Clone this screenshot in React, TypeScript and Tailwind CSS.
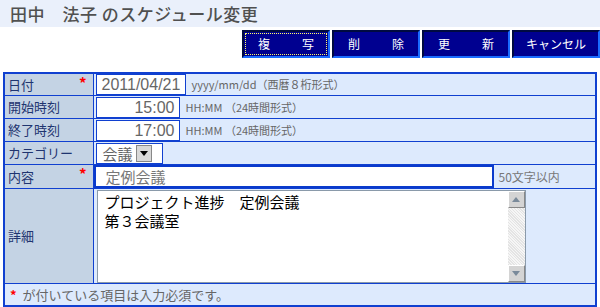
import React from 'react'

const jp = "font-['Noto_Sans_CJK_JP','Liberation_Sans',sans-serif]"
const num = "font-['Liberation_Sans','Noto_Sans_CJK_JP',sans-serif]"

const ActionButton = ({ children, focus }: { children: React.ReactNode; focus?: boolean }) => (
  <div className="h-[28px] w-[88px] border-2 border-t-[#000a40] border-l-[#000a40] border-r-[#1a6bff] border-b-[#1a6bff] bg-[#000090] p-[1px]">
    <div
      className={`flex h-full items-center px-[10px] text-[12px] leading-none text-white ${
        focus ? 'border border-dotted border-[#ffff66]' : 'border border-transparent'
      }`}
    >
      {children}
    </div>
  </div>
)

const Label = ({ text, required }: { text: string; required?: boolean }) => (
  <td className="relative w-[89px] border border-[#1040d0] bg-[#c4d3e4] px-[3px] align-middle text-[13px] text-[#1f3570]">
    {text}
    {required && <span className="absolute right-[6px] top-[1px] text-[15px] font-bold leading-none text-[#ff0000]">*</span>}
  </td>
)

export default function App() {
  return (
    <div className={`h-[307px] w-[600px] overflow-hidden bg-white ${jp}`}>
      {/* タイトル */}
      <div className="flex h-[27px] items-center bg-[#eaf0fb] pl-[10px] text-[17px] font-medium tracking-[0.5px] text-[#505050]">
        田中　法子 のスケジュール変更
      </div>

      {/* ボタン */}
      <div className="mt-[3px] flex justify-end gap-[2px]">
        <ActionButton focus>
          <span className="flex w-full justify-between px-[2px]"><span>複</span><span>写</span></span>
        </ActionButton>
        <ActionButton>
          <span className="flex w-full justify-between px-[2px]"><span>削</span><span>除</span></span>
        </ActionButton>
        <ActionButton>
          <span className="flex w-full justify-between px-[2px]"><span>更</span><span>新</span></span>
        </ActionButton>
        <ActionButton>
          <span className="w-full text-center">キャンセル</span>
        </ActionButton>
      </div>

      {/* フォーム */}
      <table className="ml-[3px] mt-[14px] w-[594px] border-collapse border-2 border-[#1040d0]">
        <tbody>
          <tr className="h-[22px]">
            <Label text="日付" required />
            <td className="border border-[#1040d0] bg-[#ddeafd] py-0 pl-[2px]">
              <div className="flex items-center">
                <div className={`h-[21px] w-[90px] border border-[#1040d0] bg-white pl-[5px] text-[16px] leading-[20px] text-[#666] ${num}`}>
                  2011/04/21
                </div>
                <span className="ml-[6px] text-[11px] text-[#666]">yyyy/mm/dd（西暦８桁形式）</span>
              </div>
            </td>
          </tr>
          <tr className="h-[23px]">
            <Label text="開始時刻" />
            <td className="border border-[#1040d0] bg-[#ddeafd] py-0 pl-[2px]">
              <div className="flex items-center">
                <div className={`h-[21px] w-[84px] border border-[#1040d0] bg-white pr-[4px] text-right text-[16px] leading-[20px] text-[#666] ${num}`}>
                  15:00
                </div>
                <span className="ml-[6px] text-[11px] text-[#666]">HH:MM （24時間形式）</span>
              </div>
            </td>
          </tr>
          <tr className="h-[23px]">
            <Label text="終了時刻" />
            <td className="border border-[#1040d0] bg-[#ddeafd] py-0 pl-[2px]">
              <div className="flex items-center">
                <div className={`h-[21px] w-[84px] border border-[#1040d0] bg-white pr-[4px] text-right text-[16px] leading-[20px] text-[#666] ${num}`}>
                  17:00
                </div>
                <span className="ml-[6px] text-[11px] text-[#666]">HH:MM （24時間形式）</span>
              </div>
            </td>
          </tr>
          <tr className="h-[23px]">
            <Label text="カテゴリー" />
            <td className="border border-[#1040d0] bg-[#ddeafd] py-0 pl-[2px]">
              <div className="flex h-[21px] w-[67px] items-center border border-[#1040d0] bg-white pl-[6px]">
                <span className="text-[15px] leading-none text-[#666]">会議</span>
                <span className="ml-[3px] flex h-[17px] w-[16px] items-center justify-center border border-[#888] bg-[#d8d8d8]">
                  <svg width="8" height="5" viewBox="0 0 8 5"><path d="M0 0h8L4 5z" fill="#000" /></svg>
                </span>
              </div>
            </td>
          </tr>
          <tr className="h-[23px]">
            <Label text="内容" required />
            <td className="border border-[#1040d0] bg-[#ddeafd] p-0">
              <div className="flex items-center">
                <div className="h-[23px] w-[400px] border-2 border-[#0a3acc] bg-white pl-[10px] text-[15px] leading-[19px] text-[#777]">
                  定例会議
                </div>
                <span className="ml-[5px] text-[12px] text-[#777]">50文字以内</span>
              </div>
            </td>
          </tr>
          <tr className="h-[95px]">
            <Label text="詳細" />
            <td className="border border-[#1040d0] bg-[#ddeafd] py-0 pl-[3px]">
              <div className="flex h-[93px] w-[429px] border border-[#8a9aaa] bg-white">
                <div className="flex-1 pl-[7px] pt-[1px] text-[15px] leading-[19px] text-black">
                  プロジェクト進捗　定例会議
                  <br />
                  第３会議室
                </div>
                <div className="flex w-[17px] flex-col bg-[repeating-linear-gradient(45deg,#e4e4e4_0px,#e4e4e4_1px,#f6f6f6_1px,#f6f6f6_2px)]">
                  <div className="flex h-[17px] items-center justify-center border border-b-[#888] border-l-white border-r-[#888] border-t-white bg-[#d4d4d4]">
                    <svg width="8" height="5" viewBox="0 0 8 5"><path d="M0 5h8L4 0z" fill="#7a8a9a" /></svg>
                  </div>
                  <div className="flex-1" />
                  <div className="flex h-[17px] items-center justify-center border border-b-[#888] border-l-white border-r-[#888] border-t-white bg-[#d4d4d4]">
                    <svg width="8" height="5" viewBox="0 0 8 5"><path d="M0 0h8L4 5z" fill="#7a8a9a" /></svg>
                  </div>
                </div>
              </div>
            </td>
          </tr>
          <tr className="h-[22px]">
            <td colSpan={2} className="border border-[#1040d0] bg-[#ddeafd] pl-[5px] text-[13px] text-[#666]">
              <span className="mr-[6px] font-bold text-[#ff0000]">*</span>が付いている項目は入力必須です。
            </td>
          </tr>
        </tbody>
      </table>
    </div>
  )
}
